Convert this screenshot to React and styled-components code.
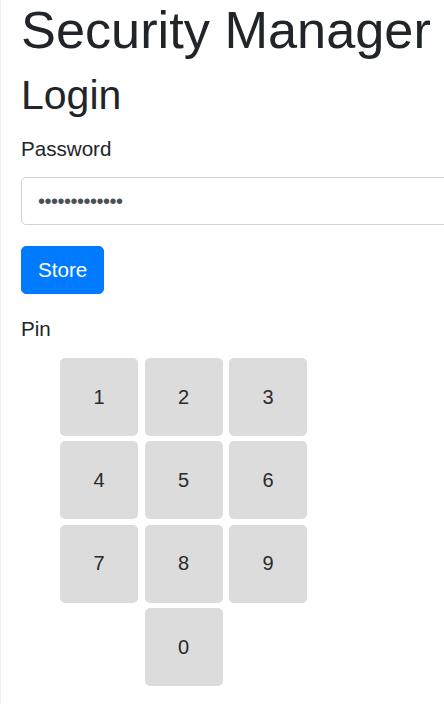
import { createGlobalStyle, styled } from "styled-components";

const GlobalStyle = createGlobalStyle`
  html, body {
    margin: 0;
    padding: 0;
    background: #fff;
    overflow: hidden;
  }

  body {
    font-family: "Liberation Sans", Arial, sans-serif;
    color: #212529;
  }
`;

const Page = styled.main`
  min-height: 704px;
  border-left: 1px solid #efefef;
  padding-left: 20px;
  overflow: hidden;
`;

const Title = styled.h1`
  margin: 0;
  font-size: 52.3px;
  font-weight: 400;
  line-height: 1.15;
  white-space: nowrap;
`;

const Subtitle = styled.h2`
  margin: 11px 0 0;
  font-size: 41px;
  font-weight: 400;
  line-height: 1.2;
`;

const Label = styled.label`
  display: block;
  margin-top: ${(p) => p.$top}px;
  font-size: 20.6px;
  line-height: 1.5;
`;

const PasswordInput = styled.input`
  display: block;
  box-sizing: border-box;
  width: 520px;
  height: 48px;
  margin-top: 12px;
  padding: 8px 16px;
  font-family: inherit;
  font-size: 20px;
  line-height: 1.5;
  letter-spacing: -0.5px;
  color: #495057;
  background: #fff;
  border: 1px solid #ced4da;
  border-radius: 5px;
  outline: none;
`;

const StoreButton = styled.button`
  display: block;
  margin-top: 21px;
  height: 48px;
  padding: 0 16px;
  font-family: inherit;
  font-size: 20.6px;
  line-height: 1.5;
  color: #fff;
  background: #007bff;
  border: 1px solid #007bff;
  border-radius: 5px;
  cursor: pointer;
`;

const Keypad = styled.div`
  display: grid;
  grid-template-columns: repeat(3, 78px);
  column-gap: 6.5px;
  row-gap: 5.3px;
  margin: 13px 0 0 39px;
`;

const Key = styled.button`
  grid-column: ${(p) => p.$col || "auto"};
  height: 78px;
  padding: 0;
  font-family: inherit;
  font-size: 20px;
  color: #2a2a2a;
  background: #dcdcdc;
  border: none;
  border-radius: 5px;
  cursor: pointer;
`;

const digits = ["1", "2", "3", "4", "5", "6", "7", "8", "9"];

const App = () => {
  return (
    <>
      <GlobalStyle />
      <Page>
        <Title>Security Manager</Title>
        <Subtitle>Login</Subtitle>
        <Label $top={14} htmlFor="password">
          Password
        </Label>
        <PasswordInput
          id="password"
          type="password"
          value="1234567890123"
          readOnly
        />
        <StoreButton>Store</StoreButton>
        <Label $top={20}>Pin</Label>
        <Keypad>
          {digits.map((d) => (
            <Key key={d}>{d}</Key>
          ))}
          <Key $col={2}>0</Key>
        </Keypad>
      </Page>
    </>
  );
};

export default App;
